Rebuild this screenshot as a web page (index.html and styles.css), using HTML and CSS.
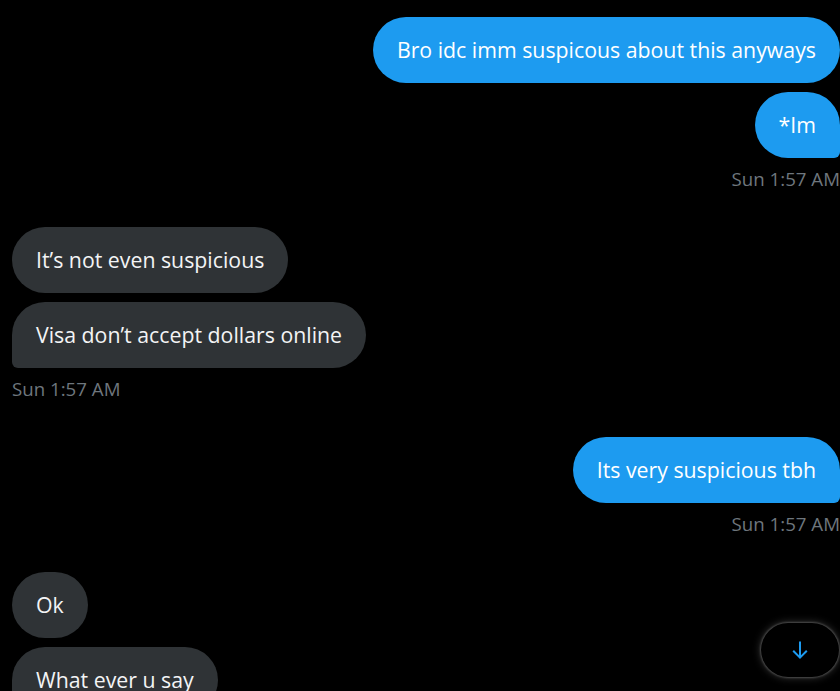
FILE: index.html
```html
<!DOCTYPE html>
<html lang="en">
<head>
<meta charset="utf-8">
<title>Messages</title>
<link rel="stylesheet" href="styles.css">
</head>
<body>
<main class="thread">
  <section class="group sent">
    <div class="bubble">Bro idc imm suspicous about this anyways</div>
    <div class="bubble last">*Im</div>
    <div class="time">Sun 1:57 AM</div>
  </section>
  <section class="group received">
    <div class="bubble">It’s not even suspicious</div>
    <div class="bubble last">Visa don’t accept dollars online</div>
    <div class="time">Sun 1:57 AM</div>
  </section>
  <section class="group sent">
    <div class="bubble last">Its very suspicious tbh</div>
    <div class="time">Sun 1:57 AM</div>
  </section>
  <section class="group received">
    <div class="bubble">Ok</div>
    <div class="bubble last">What ever u say</div>
  </section>
</main>
<button class="scroll-down" aria-label="Scroll to bottom">
  <svg viewBox="0 0 24 24" width="24" height="24" aria-hidden="true">
    <path d="M12 3.5V19.5M5.2 12.8L12 19.6L18.8 12.8" fill="none" stroke="#1d9bf0" stroke-width="2"/>
  </svg>
</button>
</body>
</html>
```

FILE: styles.css
```css
html, body {
  margin: 0;
  padding: 0;
  background: #000;
  height: 100%;
  overflow: hidden;
}

body {
  font-family: "Open Sans", "Noto Sans", "Liberation Sans", sans-serif;
  color: #fff;
}

.thread {
  display: flex;
  flex-direction: column;
  padding: 17px 0 0 12px;
}

.group {
  display: flex;
  flex-direction: column;
  gap: 9.5px;
  padding-bottom: 36px;
}

.group.sent {
  align-items: flex-end;
}

.group.received {
  align-items: flex-start;
}

.bubble {
  font-size: 21.3px;
  line-height: 29.5px;
  padding: 18px 24px;
  border-radius: 33px;
  white-space: nowrap;
}

.sent .bubble {
  background: #1d9bf0;
  color: #fff;
}

.received .bubble {
  background: #2f3336;
  color: #f3f4f5;
}

.sent .bubble.last {
  border-bottom-right-radius: 6px;
}

.received .bubble.last {
  border-bottom-left-radius: 6px;
}

.time {
  font-size: 18.7px;
  line-height: 24px;
  color: #6e767d;
}

.scroll-down {
  position: absolute;
  left: 761px;
  top: 623px;
  width: 78px;
  height: 54px;
  border: 0;
  border-radius: 27px;
  background: #000;
  box-shadow: 0 0 8px rgba(255, 255, 255, 0.25), 0 0 2px 1px rgba(255, 255, 255, 0.2);
  display: flex;
  align-items: center;
  justify-content: center;
  padding: 0;
}
```
